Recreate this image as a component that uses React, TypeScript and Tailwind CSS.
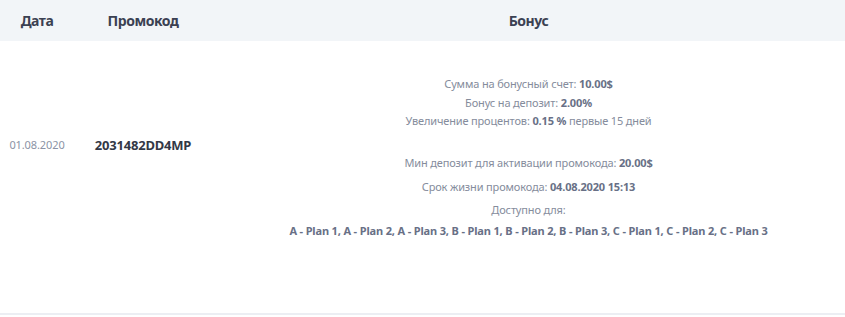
export default function App() {
  const plans = 'A - Plan 1, A - Plan 2, A - Plan 3, B - Plan 1, B - Plan 2, B - Plan 3, C - Plan 1, C - Plan 2, C - Plan 3';

  return (
    <div className="w-[845px] h-[317px] bg-white font-['Noto_Sans',sans-serif]">
      <div className="grid grid-cols-[74px_138px_1fr] h-[41px] items-center bg-[#f2f5f8] text-[14px] font-bold tracking-[-0.45px] text-[#3b4152]">
        <div className="text-center">Дата</div>
        <div className="text-center">Промокод</div>
        <div className="text-center">Бонус</div>
      </div>
      <div className="grid grid-cols-[74px_138px_1fr] h-[274px] border-b-2 border-[#eceef3]">
        <div className="pt-[96px] text-center text-[11px] tracking-[-0.1px] text-[#8b93a5]">01.08.2020</div>
        <div className="pt-[95px] text-center text-[13px] font-bold tracking-[-0.2px] text-[#333846]">2031482DD4MP</div>
        <div className="pt-[34px] text-center text-[11px] tracking-[-0.15px] text-[#858c9c]">
          <div className="leading-[18.5px]">
            <p>Сумма на бонусный счет: <b className="text-[#687086]">10.00$</b></p>
            <p>Бонус на депозит: <b className="text-[#687086]">2.00%</b></p>
            <p>Увеличение процентов: <b className="text-[#687086]">0.15 %</b> первые 15 дней</p>
          </div>
          <div className="mt-[23px] leading-[17px]">
            <p>Мин депозит для активации промокода: <b className="text-[#687086]">20.00$</b></p>
            <p className="mt-[7px]">Срок жизни промокода: <b className="text-[#687086]">04.08.2020 15:13</b></p>
            <p className="mt-[6px]">Доступно для:</p>
            <p className="mt-[4px] font-bold text-[#687086]">{plans}</p>
          </div>
        </div>
      </div>
    </div>
  );
}
